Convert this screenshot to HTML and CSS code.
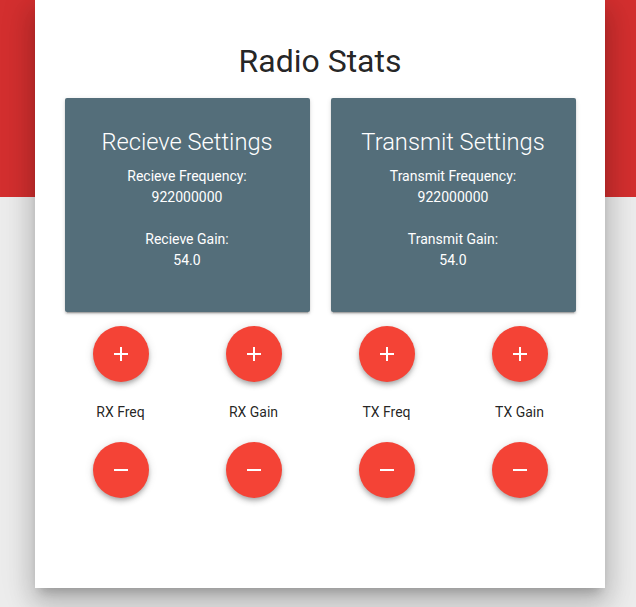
FILE: index.html
```html
<!DOCTYPE html>
<html>
<head>
<meta charset="utf-8">
<link rel="stylesheet" href="styles.css">
</head>
<body>
<main class="sheet">
  <h1 class="title">Radio Stats</h1>
  <div class="cards">
    <section class="card">
      <h2 class="card-title">Recieve Settings</h2>
      <p class="card-text">Recieve Frequency:<br>922000000<br><br>Recieve Gain:<br>54.0</p>
    </section>
    <section class="card">
      <h2 class="card-title">Transmit Settings</h2>
      <p class="card-text">Transmit Frequency:<br>922000000<br><br>Transmit Gain:<br>54.0</p>
    </section>
  </div>
  <div class="controls">
    <button class="fab" aria-label="Increase RX Freq"><svg viewBox="0 0 24 24"><path d="M19 13h-6v6h-2v-6H5v-2h6V5h2v6h6v2z"/></svg></button>
    <button class="fab" aria-label="Increase RX Gain"><svg viewBox="0 0 24 24"><path d="M19 13h-6v6h-2v-6H5v-2h6V5h2v6h6v2z"/></svg></button>
    <button class="fab" aria-label="Increase TX Freq"><svg viewBox="0 0 24 24"><path d="M19 13h-6v6h-2v-6H5v-2h6V5h2v6h6v2z"/></svg></button>
    <button class="fab" aria-label="Increase TX Gain"><svg viewBox="0 0 24 24"><path d="M19 13h-6v6h-2v-6H5v-2h6V5h2v6h6v2z"/></svg></button>
    <span class="label">RX Freq</span>
    <span class="label">RX Gain</span>
    <span class="label">TX Freq</span>
    <span class="label">TX Gain</span>
    <button class="fab" aria-label="Decrease RX Freq"><svg viewBox="0 0 24 24"><path d="M19 13H5v-2h14v2z"/></svg></button>
    <button class="fab" aria-label="Decrease RX Gain"><svg viewBox="0 0 24 24"><path d="M19 13H5v-2h14v2z"/></svg></button>
    <button class="fab" aria-label="Decrease TX Freq"><svg viewBox="0 0 24 24"><path d="M19 13H5v-2h14v2z"/></svg></button>
    <button class="fab" aria-label="Decrease TX Gain"><svg viewBox="0 0 24 24"><path d="M19 13H5v-2h14v2z"/></svg></button>
  </div>
</main>
</body>
</html>
```

FILE: styles.css
```css
html, body {
  margin: 0;
  padding: 0;
}

body {
  min-height: 607px;
  background: linear-gradient(#d32f2f 0, #d32f2f 197px, #ececec 197px, #ececec 100%);
  font-family: Roboto, "Liberation Sans", sans-serif;
  color: rgba(0, 0, 0, 0.87);
  overflow: hidden;
}

.sheet {
  box-sizing: border-box;
  width: 570px;
  height: 588px;
  margin: 0 0 0 35px;
  padding-top: 41px;
  background: #fff;
  box-shadow: 0 16px 24px 2px rgba(0, 0, 0, 0.14),
              0 6px 30px 5px rgba(0, 0, 0, 0.12),
              0 8px 10px -5px rgba(0, 0, 0, 0.2);
}

.title {
  margin: 0;
  font-size: 32px;
  line-height: 40px;
  font-weight: 400;
  text-align: center;
  color: rgba(0, 0, 0, 0.87);
}

.cards {
  display: flex;
  justify-content: center;
  gap: 21px;
  margin-top: 17px;
}

.card {
  box-sizing: border-box;
  width: 245px;
  height: 214px;
  padding-top: 28px;
  background: #546e7a;
  border-radius: 2px;
  color: #fff;
  text-align: center;
  box-shadow: 0 2px 2px 0 rgba(0, 0, 0, 0.14),
              0 3px 1px -2px rgba(0, 0, 0, 0.2),
              0 1px 5px 0 rgba(0, 0, 0, 0.12);
}

.card-title {
  margin: 0;
  font-size: 23.7px;
  line-height: 32px;
  font-weight: 300;
}

.card-text {
  margin: 8px 0 0;
  font-size: 14px;
  line-height: 21px;
  font-weight: 400;
}

.controls {
  display: grid;
  grid-template-columns: repeat(4, 133px);
  grid-template-rows: 56px 20px 56px;
  row-gap: 20px;
  width: 532px;
  margin: 14px auto 0;
  justify-items: center;
  align-items: center;
}

.fab {
  width: 56px;
  height: 56px;
  padding: 0;
  border: none;
  border-radius: 50%;
  background: #f44336;
  display: flex;
  align-items: center;
  justify-content: center;
  cursor: pointer;
  box-shadow: 0 4px 5px 0 rgba(0, 0, 0, 0.14),
              0 1px 10px 0 rgba(0, 0, 0, 0.12),
              0 2px 4px -1px rgba(0, 0, 0, 0.2);
}

.fab svg {
  width: 24px;
  height: 24px;
  fill: #fff;
}

.label {
  font-size: 14px;
  line-height: 20px;
  color: rgba(0, 0, 0, 0.87);
}
```
